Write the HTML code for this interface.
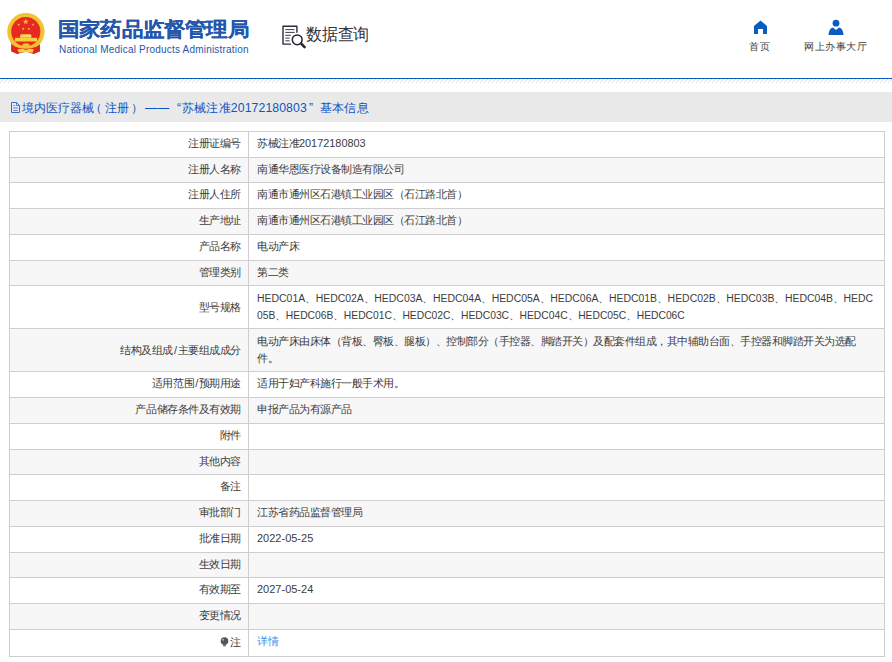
<!DOCTYPE html>
<html><head><meta charset="utf-8">
<style>
*{margin:0;padding:0;box-sizing:border-box}
html,body{width:892px;height:662px;overflow:hidden;background:#fff;font-family:"Liberation Sans",sans-serif;color:#333}
.abs{position:absolute}
#title{left:58px;top:15px;font-size:21px;letter-spacing:0.2px;font-weight:bold;color:#2356ac;white-space:nowrap;line-height:28px;transform-origin:0 50%;transform:scaleY(0.93);-webkit-text-stroke:0.1px #2356ac}
#sub{left:59px;top:44px;font-size:10px;color:#2356ac;white-space:nowrap;line-height:12px;letter-spacing:0.2px}
#sq{left:306px;top:22px;font-size:16px;letter-spacing:-0.25px;color:#34343c;transform-origin:0 0;transform:scaleY(1.06);line-height:24px;white-space:nowrap}
.nav{font-size:10px;letter-spacing:0.5px;color:#444;line-height:14px;white-space:nowrap}
#bline{left:0;top:78px;width:892px;height:1px;background:#0a5cc0}
#crumb{left:0;top:92px;width:892px;height:30px;background:#e9e9e9}
.ct{position:absolute;top:100px;font-size:12px;letter-spacing:0.2px;color:#0c55c4;line-height:16px;white-space:nowrap}
.row{position:absolute;left:9px;width:876px}
.hb{position:absolute;left:9px;width:876px;height:1px;background:#cfcdcf}
.lab{position:absolute;left:0;width:232px;top:0;bottom:0;display:flex;align-items:center;justify-content:flex-end;font-size:11px;letter-spacing:-0.44px;color:#3c3c3c;white-space:nowrap}
.val{position:absolute;left:248px;top:0;bottom:0;display:flex;align-items:center;font-size:11px;letter-spacing:-0.5px;color:#3c3c3c;white-space:nowrap;line-height:17px}
.la{font-size:10.5px;letter-spacing:0}
#vl{left:9px;width:1px;background:#cfcdcf}
#vm{left:248px;width:1px;background:#cfcdcf}
#vr{left:884px;width:1px;background:#cfcdcf}
</style></head><body>
<svg class="abs" style="left:0;top:0" width="52" height="58" viewBox="0 0 52 58">
  <path d="M11.3 40 L11.2 51 L17.3 53.8 L26 51 L33.8 53.8 L39.9 51 L39.8 40 Z" fill="#e3261c"/>
  <circle cx="25.9" cy="31.6" r="18.7" fill="#f3c232"/>
  <circle cx="25.8" cy="31.6" r="14.6" fill="#e8291f"/>
  <polygon points="25.80,18.80 26.51,20.83 28.65,20.87 26.94,22.17 27.56,24.23 25.80,23.00 24.04,24.23 24.66,22.17 22.95,20.87 25.09,20.83" fill="#f0c43a"/>
  <polygon points="19.25,23.20 19.23,24.34 20.30,24.76 19.20,25.09 19.14,26.24 18.48,25.30 17.37,25.59 18.06,24.68 17.44,23.71 18.52,24.08" fill="#e8c03a"/>
  <polygon points="32.45,23.20 33.18,24.08 34.26,23.71 33.64,24.68 34.33,25.59 33.22,25.30 32.56,26.24 32.50,25.09 31.40,24.76 32.47,24.34" fill="#e8c03a"/>
  <polygon points="23.38,27.22 23.56,28.36 24.68,28.58 23.67,29.10 23.80,30.24 22.99,29.43 21.95,29.91 22.47,28.89 21.69,28.05 22.82,28.22" fill="#e8c03a"/>
  <polygon points="28.62,27.22 29.18,28.22 30.31,28.05 29.53,28.89 30.05,29.91 29.01,29.43 28.20,30.24 28.33,29.10 27.32,28.58 28.44,28.36" fill="#e8c03a"/>
  <path d="M21 34.3 H30.6 L31.4 35.4 V37.8 H20.1 V35.4 Z" fill="#f7d860"/>
  <rect x="14.9" y="37.8" width="22.2" height="3.7" fill="#f5cf3e"/>
  <path d="M11.6 45 Q26 52.5 39.6 45 L39.9 51.5 L33.8 54 L26 51.5 L17.3 54 L11.2 51.5 Z" fill="#e3261c"/>
  <path d="M12 43.5 Q26 51 39.8 43.5" fill="none" stroke="#f3c232" stroke-width="1.6"/>
  <ellipse cx="26" cy="45.2" rx="3.6" ry="1.9" fill="#f3c232"/>
  <path d="M17.3 49.5 Q21.5 48 26 50 Q30.5 48 33.8 49.5 L32.5 52.8 Q26 51 19 52.8 Z" fill="#f5cf40"/>
</svg>
<div id="title" class="abs">国家药品监督管理局</div>
<div id="sub" class="abs">National Medical Products Administration</div>
<svg class="abs" style="left:279px;top:22px" width="30" height="28" viewBox="0 0 30 28">
  <path d="M11.6 22.1 H4 V4.2 H17.9 V10.2" fill="none" stroke="#2b2b3b" stroke-width="1.4" stroke-linejoin="round" stroke-linecap="round"/>
  <path d="M6.3 7.6 H15.4 M6.3 10.4 H15.7 M6.3 13.3 H11.8 M6.3 16.1 H10.6 M6.3 18.8 H10.6" stroke="#3a3a4a" stroke-width="1"/>
  <circle cx="18.2" cy="17.8" r="4.9" fill="none" stroke="#232334" stroke-width="1.5"/>
  <path d="M22.2 21.6 L25.6 25.2" stroke="#232334" stroke-width="2.5" stroke-linecap="round"/>
</svg>
<div id="sq" class="abs">数据查询</div>
<svg class="abs" style="left:753px;top:20px" width="15" height="15" viewBox="0 0 15 15">
  <path d="M7.5 0.5 L14 6 V14 H10 V9 H5 V14 H1 V6 Z" fill="#0a5cc0"/>
</svg>
<div class="abs nav" style="left:749px;top:40px">首页</div>
<svg class="abs" style="left:828px;top:19px" width="16" height="17" viewBox="0 0 16 17">
  <circle cx="8" cy="4.2" r="3.4" fill="#0a5cc0"/>
  <path d="M0.5 16 Q1 9.5 5 8.6 L8 11 L11 8.6 Q15 9.5 15.5 16 Z" fill="#0a5cc0"/>
</svg>
<div class="abs nav" style="left:804px;top:40px">网上办事大厅</div>
<div id="bline" class="abs"></div>
<svg class="abs" style="left:0;top:79px" width="892" height="4"><defs><pattern id="hp" width="4" height="4" patternUnits="userSpaceOnUse"><path d="M-1 5 L5 -1" stroke="#e0e0e0" stroke-width="1"/></pattern></defs><rect width="892" height="4" fill="url(#hp)"/></svg>
<div id="crumb" class="abs"></div>
<svg class="abs" style="left:10px;top:101px" width="11" height="13" viewBox="0 0 11 13">
  <path d="M1.5 1.5 H6.5 L9.5 4.5 V11.5 H1.5 Z" fill="none" stroke="#1d5fcc" stroke-width="0.9" stroke-linejoin="round"/>
  <path d="M6.5 1.5 V4.5 H9.5" fill="none" stroke="#1d5fcc" stroke-width="0.7"/>
  <path d="M3.3 4.6 H5 M3.3 7 H7.8 M3.3 9.5 H7.8" stroke="#3b6fd0" stroke-width="0.8"/>
</svg>
<div class="ct" style="left:21.5px">境内医疗器械</div>
<div class="ct" style="left:90px">（</div>
<div class="ct" style="left:105px">注册</div>
<div class="ct" style="left:131px">）</div>
<div class="ct" style="left:145px">——</div>
<div class="ct" style="left:177px">“</div>
<div class="ct" style="left:182px">苏械注准<span style="font-size:12.25px;letter-spacing:0.1px">20172180803</span></div>
<div class="ct" style="left:309px">”</div>
<div class="ct" style="left:320px">基本信息</div>
<div class="row" style="top:132px;height:25px;background:#fff"><div class="lab"><div style="margin-top:-2px">注册证编号</div></div><div class="val"><div style="margin-top:-2px">苏械注准<span class="la" style="font-size:10.9px">20172180803</span></div></div></div>
<div class="hb" style="top:131px"></div>
<div class="row" style="top:158px;height:24px;background:#f7f7f7"><div class="lab"><div style="margin-top:-2px">注册人名称</div></div><div class="val"><div style="margin-top:-2px">南通华恩医疗设备制造有限公司</div></div></div>
<div class="hb" style="top:157px"></div>
<div class="row" style="top:183px;height:25px;background:#fff"><div class="lab"><div style="margin-top:-2px">注册人住所</div></div><div class="val"><div style="margin-top:-2px">南通市通州区石港镇工业园区（石江路北首）</div></div></div>
<div class="hb" style="top:182px"></div>
<div class="row" style="top:209px;height:25px;background:#f7f7f7"><div class="lab"><div style="margin-top:-2px">生产地址</div></div><div class="val"><div style="margin-top:-2px">南通市通州区石港镇工业园区（石江路北首）</div></div></div>
<div class="hb" style="top:208px"></div>
<div class="row" style="top:235px;height:25px;background:#fff"><div class="lab"><div style="margin-top:-2px">产品名称</div></div><div class="val"><div style="margin-top:-2px">电动产床</div></div></div>
<div class="hb" style="top:234px"></div>
<div class="row" style="top:261px;height:24px;background:#f7f7f7"><div class="lab"><div style="margin-top:-2px">管理类别</div></div><div class="val"><div style="margin-top:-2px">第二类</div></div></div>
<div class="hb" style="top:260px"></div>
<div class="row" style="top:286px;height:42px;background:#fff"><div class="lab"><div>型号规格</div></div><div class="val"><div><span class="la" style="font-size:10.45px">HEDC01A</span>、<span class="la" style="font-size:10.45px">HEDC02A</span>、<span class="la" style="font-size:10.45px">HEDC03A</span>、<span class="la" style="font-size:10.45px">HEDC04A</span>、<span class="la" style="font-size:10.45px">HEDC05A</span>、<span class="la" style="font-size:10.45px">HEDC06A</span>、<span class="la" style="font-size:10.45px">HEDC01B</span>、<span class="la" style="font-size:10.45px">HEDC02B</span>、<span class="la" style="font-size:10.45px">HEDC03B</span>、<span class="la" style="font-size:10.45px">HEDC04B</span>、<span class="la" style="font-size:10.45px">HEDC</span><br><span class="la" style="font-size:10.3px">05B</span>、<span class="la" style="font-size:10.3px">HEDC06B</span>、<span class="la" style="font-size:10.3px">HEDC01C</span>、<span class="la" style="font-size:10.3px">HEDC02C</span>、<span class="la" style="font-size:10.3px">HEDC03C</span>、<span class="la" style="font-size:10.3px">HEDC04C</span>、<span class="la" style="font-size:10.3px">HEDC05C</span>、<span class="la" style="font-size:10.3px">HEDC06C</span></div></div></div>
<div class="hb" style="top:285px"></div>
<div class="row" style="top:329px;height:42px;background:#f7f7f7"><div class="lab"><div>结构及组成<span style="padding:0 1px">/</span>主要组成成分</div></div><div class="val"><div>电动产床由床体（背板、臀板、腿板）、控制部分（手控器、脚踏开关）及配套件组成，其中辅助台面、手控器和脚踏开关为选配<br>件。</div></div></div>
<div class="hb" style="top:328px"></div>
<div class="row" style="top:372px;height:25px;background:#fff"><div class="lab"><div style="margin-top:-2px">适用范围<span style="padding:0 1px">/</span>预期用途</div></div><div class="val"><div style="margin-top:-2px">适用于妇产科施行一般手术用。</div></div></div>
<div class="hb" style="top:371px"></div>
<div class="row" style="top:398px;height:25px;background:#f7f7f7"><div class="lab"><div style="margin-top:-2px">产品储存条件及有效期</div></div><div class="val"><div style="margin-top:-2px">申报产品为有源产品</div></div></div>
<div class="hb" style="top:397px"></div>
<div class="row" style="top:424px;height:25px;background:#fff"><div class="lab"><div style="margin-top:-2px">附件</div></div><div class="val"><div style="margin-top:-2px"></div></div></div>
<div class="hb" style="top:423px"></div>
<div class="row" style="top:450px;height:24px;background:#f7f7f7"><div class="lab"><div style="margin-top:-2px">其他内容</div></div><div class="val"><div style="margin-top:-2px"></div></div></div>
<div class="hb" style="top:449px"></div>
<div class="row" style="top:475px;height:25px;background:#fff"><div class="lab"><div style="margin-top:-2px">备注</div></div><div class="val"><div style="margin-top:-2px"></div></div></div>
<div class="hb" style="top:474px"></div>
<div class="row" style="top:501px;height:25px;background:#f7f7f7"><div class="lab"><div style="margin-top:-2px">审批部门</div></div><div class="val"><div style="margin-top:-2px">江苏省药品监督管理局</div></div></div>
<div class="hb" style="top:500px"></div>
<div class="row" style="top:527px;height:25px;background:#fff"><div class="lab"><div style="margin-top:-2px">批准日期</div></div><div class="val"><div style="margin-top:-2px"><span class="la" style="font-size:11px">2022-05-25</span></div></div></div>
<div class="hb" style="top:526px"></div>
<div class="row" style="top:553px;height:24px;background:#f7f7f7"><div class="lab"><div style="margin-top:-2px">生效日期</div></div><div class="val"><div style="margin-top:-2px"></div></div></div>
<div class="hb" style="top:552px"></div>
<div class="row" style="top:578px;height:25px;background:#fff"><div class="lab"><div style="margin-top:-2px">有效期至</div></div><div class="val"><div style="margin-top:-2px"><span class="la" style="font-size:11px">2027-05-24</span></div></div></div>
<div class="hb" style="top:577px"></div>
<div class="row" style="top:604px;height:25px;background:#f7f7f7"><div class="lab"><div style="margin-top:-2px">变更情况</div></div><div class="val"><div style="margin-top:-2px"></div></div></div>
<div class="hb" style="top:603px"></div>
<div class="row" style="top:630px;height:26px;background:#fff"><div class="lab"><div style="margin-top:-2px"><svg width="9" height="10" viewBox="0 0 9 10" style="vertical-align:-1px;margin-right:1px"><circle cx="4.5" cy="4" r="3.8" fill="#555"/><path d="M2.6 6.5 L3.3 9 H5.7 L6.4 6.5 Z" fill="#666"/><path d="M3.3 9.3 H5.7" stroke="#aaa" stroke-width="0.8"/><circle cx="3.2" cy="2.8" r="1" fill="#9bd"/></svg>注</div></div><div class="val"><div style="margin-top:-2px"><span style="color:#3d8ff0;position:relative;top:-1px">详情</span></div></div></div>
<div class="hb" style="top:629px"></div>
<div class="hb" style="top:656px"></div>
<div id="vl" class="abs" style="top:131px;height:526px"></div>
<div id="vm" class="abs" style="top:131px;height:526px"></div>
<div id="vr" class="abs" style="top:131px;height:526px"></div>
</body></html>
